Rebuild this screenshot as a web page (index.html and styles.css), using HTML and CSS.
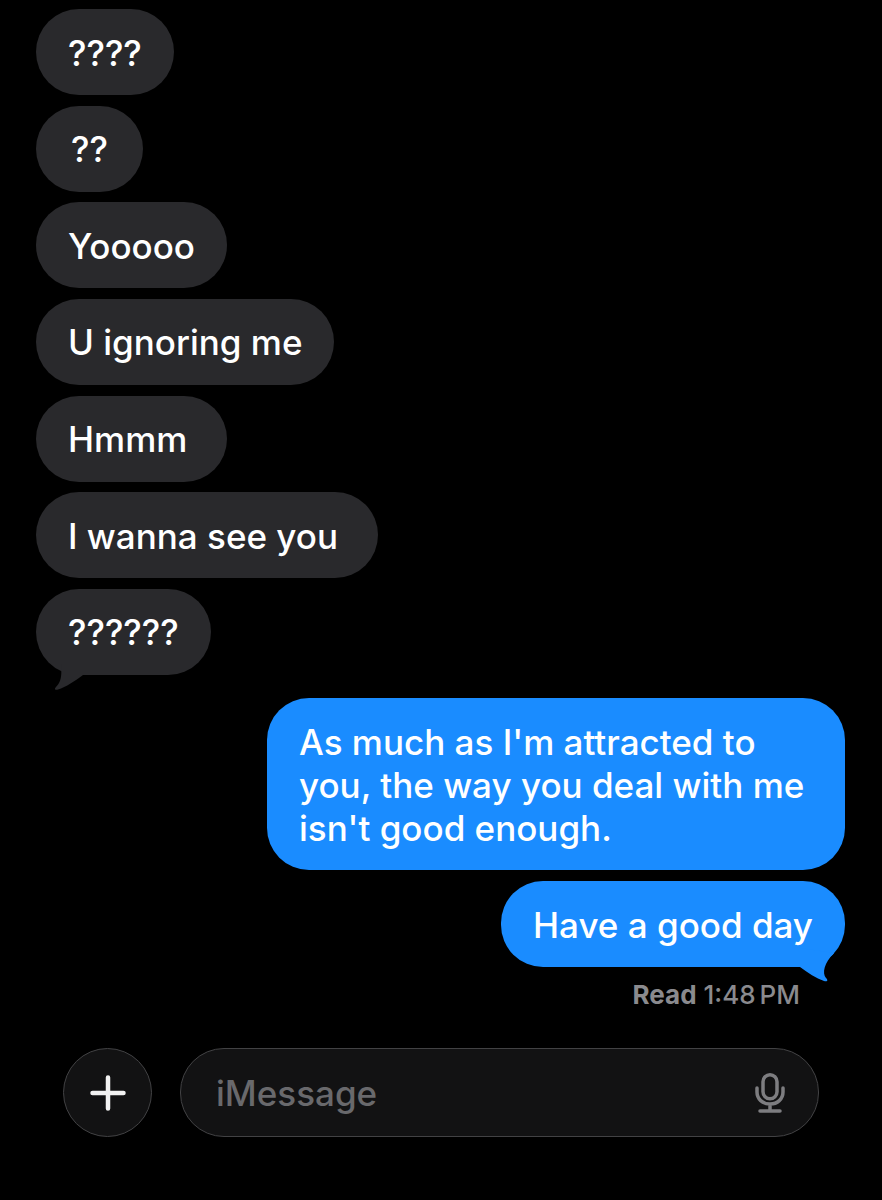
FILE: index.html
```html
<!DOCTYPE html>
<html lang="en">
<head>
  <meta charset="UTF-8" />
  <title>iMessage</title>
  <meta name="viewport" content="width=device-width, initial-scale=1.0" />
  <link rel="stylesheet" href="styles.css">
</head>
<body>
  <div class="thread">
    <div class="incoming">
      <div class="bubble">????</div>
      <div class="bubble">??</div>
      <div class="bubble">Yooooo</div>
      <div class="bubble">U ignoring me</div>
      <div class="bubble wide">Hmmm</div>
      <div class="bubble wide">I wanna see you</div>
      <div class="bubble">??????
        <svg class="tail tail-in" width="40" height="34" viewBox="0 0 40 34"><path d="M8 8C9 20 8 26 3 31C1 33 2 34.500 5 33.500C13 31 22 25 30 19V8Z" fill="#29292c"/></svg>
      </div>
    </div>
    <div class="outgoing">
      <div class="bubble blue">As much as I'm attracted to you, the way you deal with me isn't good enough.</div>
      <div class="bubble blue">Have a good day
        <svg class="tail tail-out" width="40" height="34" viewBox="0 0 40 34"><path d="M3 19C11 25 19 30 27 33C31 34 31 32 29 30C25 25 27 15 37 5L3 0Z" fill="#1a8cff"/></svg>
      </div>
      <div class="receipt"><b>Read</b> 1:48<span class="pm">PM</span></div>
    </div>
  </div>

  <div class="composer">
    <div class="plus">
      <svg width="36" height="36" viewBox="0 0 36 36"><path d="M18 2.500V33.500M2.500 18H33.500" stroke="#f2f2f2" stroke-width="4.500" stroke-linecap="round" fill="none"/></svg>
    </div>
    <div class="field">
      <span class="placeholder">iMessage</span>
      <svg class="mic" width="30" height="40" viewBox="0 0 30 40" fill="none" stroke="#7d7d80" stroke-width="3.500">
        <rect x="8" y="1.750" width="14" height="24" rx="7"/>
        <path d="M2 15V19C2 26 7.500 31 15 31S28 26 28 19V15M15 31V38M5 38H25" stroke-linecap="round"/>
      </svg>
    </div>
  </div>
</body>
</html>
```

FILE: styles.css
```css
body {
  margin: 0;
  background-color: #000;
  font-family: 'Inter', 'Liberation Sans', sans-serif;
  color: #fff;
  height: 1200px;
  overflow: hidden;
}
.thread {
  padding: 9px 37px 0 36px;
  display: flex;
  flex-direction: column;
  gap: 23px;
}
.incoming, .outgoing {
  display: flex;
  flex-direction: column;
  gap: 10.670px;
}
.incoming {
  align-items: flex-start;
}
.outgoing {
  align-items: flex-end;
}
.bubble {
  position: relative;
  background: #29292c;
  border-radius: 43px;
  padding: 22.500px 32px 20.500px;
  min-width: 43px;
  text-align: center;
  font-size: 35px;
  font-weight: 500;
  line-height: 43px;
}
.wide {
  padding-right: 40px;
}
.blue {
  background: #1a8cff;
  border-radius: 42px;
  padding-top: 23.500px;
  padding-bottom: 19.500px;
  max-width: 514px;
  text-align: left;
}
.tail {
  position: absolute;
}
.tail-in {
  left: 17px;
  bottom: -15px;
}
.tail-out {
  right: 8px;
  bottom: -15px;
}
.receipt {
  margin: 3px 45px 0 0;
  font-size: 26px;
  font-weight: 500;
  line-height: 30px;
  color: #8a8a8e;
}
.receipt b {
  font-weight: 700;
}
.pm {
  margin-left: 4px;
}
.composer {
  position: absolute;
  top: 1048px;
  left: 63px;
  width: 756px;
  display: flex;
  gap: 28px;
}
.plus {
  width: 87px;
  height: 87px;
  flex: none;
  border-radius: 50%;
  background: #121213;
  border: 1px solid #424244;
  display: flex;
  justify-content: center;
  align-items: center;
}
.field {
  flex: 1;
  height: 87px;
  border-radius: 44px;
  background: #121213;
  border: 1px solid #424244;
  display: flex;
  justify-content: space-between;
  align-items: center;
  padding: 0 33px 0 35px;
}
.placeholder {
  font-size: 35px;
  font-weight: 500;
  color: #69696c;
}
```
